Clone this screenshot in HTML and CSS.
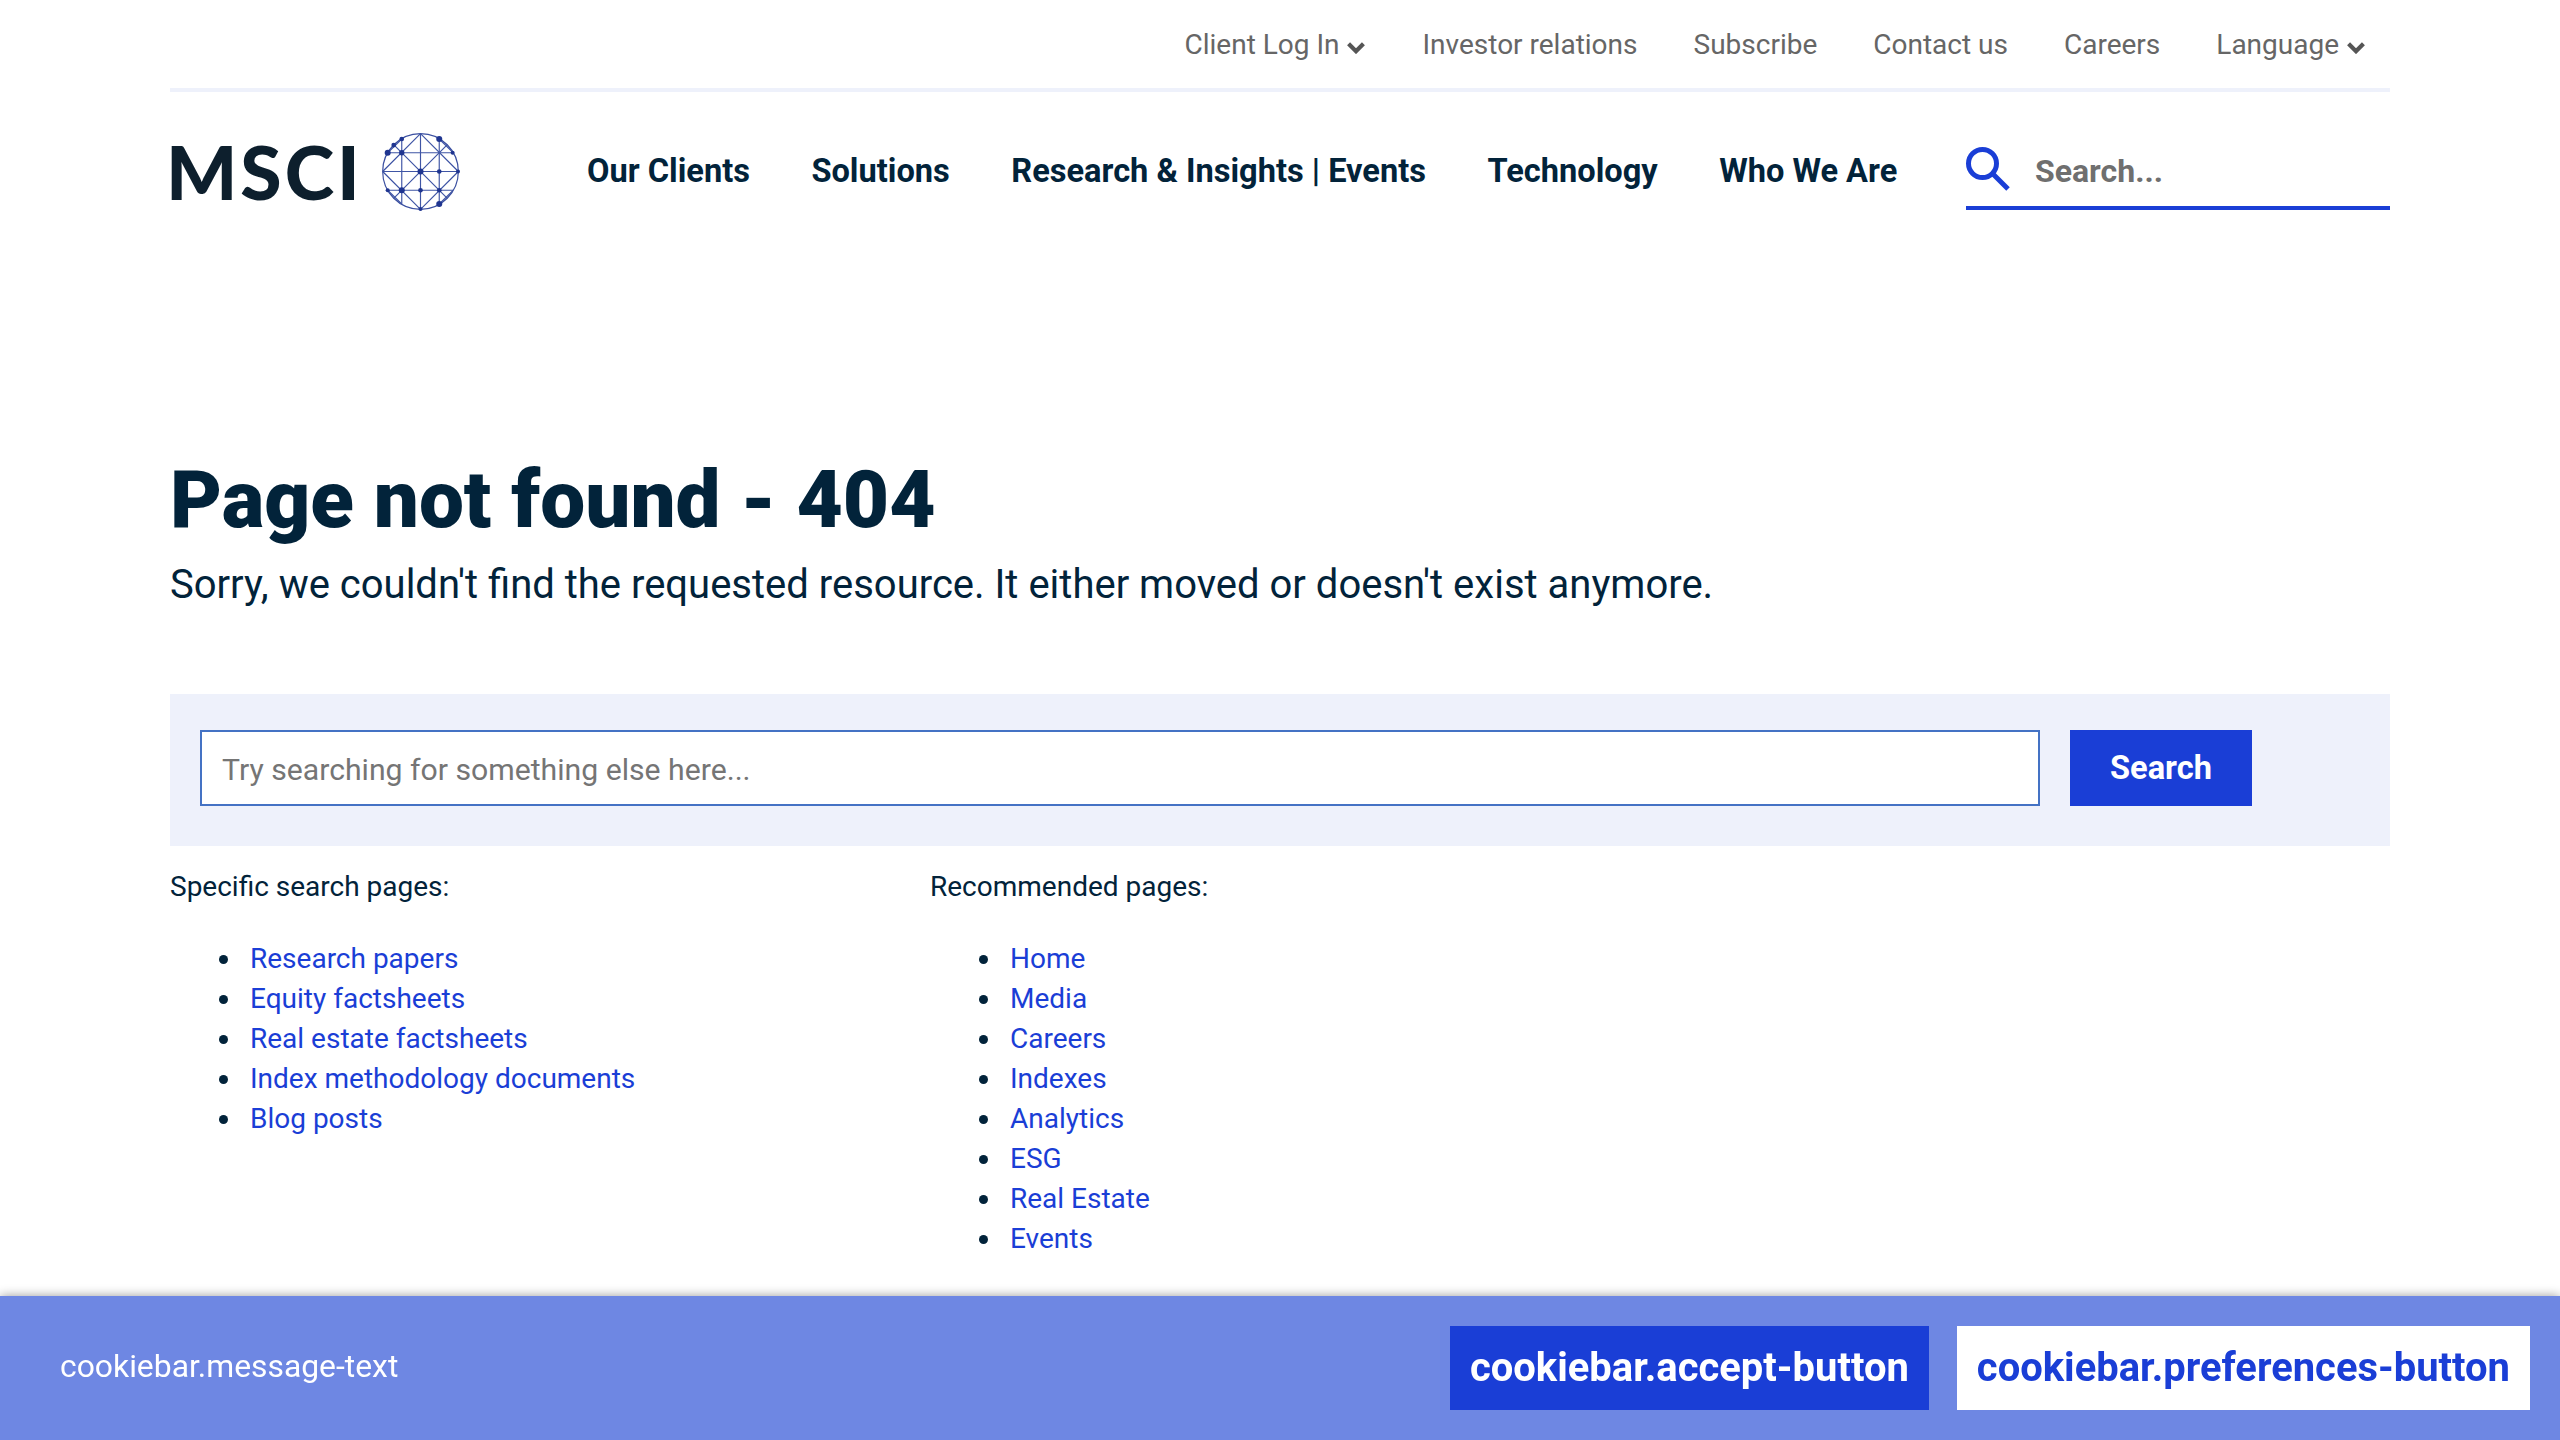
FILE: index.html
```html
<!DOCTYPE html>
<html lang="en">
<head>
    <meta charset="UTF-8">
    <meta name="viewport" content="width=device-width, initial-scale=1.0">
    <title>Page not found - 404</title>
    <link rel="stylesheet" href="styles.css">
</head>
<body>
    <header class="site-header">
        <nav class="top-nav">
            <a href="#">Client Log In <svg class="chevron" viewBox="0 0 20 14"><path d="M2 3l8 8 8-8"/></svg></a>
            <a href="#">Investor relations</a>
            <a href="#">Subscribe</a>
            <a href="#">Contact us</a>
            <a href="#">Careers</a>
            <a href="#">Language <svg class="chevron" viewBox="0 0 20 14"><path d="M2 3l8 8 8-8"/></svg></a>
        </nav>
        <div class="main-bar">
            <a class="logo" href="#">
                <span class="logo-text">MSCI</span>
                <svg class="globe" viewBox="-118 -118 236 236">
                    <defs><clipPath id="globeClip"><circle r="113"/></clipPath></defs>
                    <g clip-path="url(#globeClip)" class="globe-lines">
                        <path d="M-120 -56H120M-120 0H120M-120 56H120M-56 -120V120M0 -120V120M56 -120V120"/>
                        <path d="M0 -113L-113 0L0 113L113 0ZM-113 -113L113 113M113 -113L-113 113M-98 -56L-56 -97M56 -97L98 -56M-98 56L-56 97M56 97L98 56"/>
                    </g>
                    <circle r="113" class="globe-ring"/>
                    <g class="globe-nodes">
                        <circle cx="-56" cy="-56" r="8"/><circle cx="0" cy="0" r="9"/><circle cx="56" cy="0" r="7"/>
                        <circle cx="112" cy="0" r="6"/><circle cx="-56" cy="56" r="9"/><circle cx="0" cy="56" r="7"/>
                        <circle cx="56" cy="56" r="7"/><circle cx="0" cy="112" r="6"/><circle cx="56" cy="97" r="9"/>
                        <circle cx="-98" cy="-56" r="9"/><circle cx="56" cy="-97" r="9"/><circle cx="-56" cy="-97" r="7"/>
                        <circle cx="-80" cy="-79" r="7"/><circle cx="96" cy="-56" r="6"/><circle cx="-98" cy="56" r="6"/>
                    </g>
                </svg>
            </a>
            <nav class="main-nav">
                <a href="#">Our Clients</a>
                <a href="#">Solutions</a>
                <a href="#">Research &amp; Insights | Events</a>
                <a href="#">Technology</a>
                <a href="#">Who We Are</a>
            </nav>
            <div class="header-search">
                <svg class="search-icon" viewBox="0 0 44 44"><circle cx="16.5" cy="16.5" r="14"/><path d="M26.5 26.5l15.500 15.500"/></svg>
                <span class="header-search-text">Search...</span>
            </div>
        </div>
    </header>

    <main class="content">
        <h1>Page not found - 404</h1>
        <p class="lead">Sorry, we couldn't find the requested resource. It either moved or doesn't exist anymore.</p>

        <form class="search-band">
            <input class="search-input" type="text" placeholder="Try searching for something else here...">
            <button class="search-button" type="button">Search</button>
        </form>

        <div class="link-columns">
            <div class="link-column">
                <p>Specific search pages:</p>
                <ul>
                    <li><a href="#">Research papers</a></li>
                    <li><a href="#">Equity factsheets</a></li>
                    <li><a href="#">Real estate factsheets</a></li>
                    <li><a href="#">Index methodology documents</a></li>
                    <li><a href="#">Blog posts</a></li>
                </ul>
            </div>
            <div class="link-column">
                <p>Recommended pages:</p>
                <ul>
                    <li><a href="#">Home</a></li>
                    <li><a href="#">Media</a></li>
                    <li><a href="#">Careers</a></li>
                    <li><a href="#">Indexes</a></li>
                    <li><a href="#">Analytics</a></li>
                    <li><a href="#">ESG</a></li>
                    <li><a href="#">Real Estate</a></li>
                    <li><a href="#">Events</a></li>
                </ul>
            </div>
        </div>
    </main>

    <div class="cookiebar">
        <span class="cookiebar-text">cookiebar.message-text</span>
        <div class="cookiebar-actions">
            <button class="cookie-accept" type="button">cookiebar.accept-button</button>
            <button class="cookie-prefs" type="button">cookiebar.preferences-button</button>
        </div>
    </div>
</body>
</html>
```

FILE: styles.css
```css
body {
    font-family: Roboto, Arial, sans-serif;
    color: #02233a;
    background-color: #fff;
    margin: 0;
    height: 1440px;
    overflow: hidden;
}
a {
    text-decoration: none;
    color: inherit;
}
.site-header {
    margin: 0 170px;
}
.top-nav {
    display: flex;
    justify-content: flex-end;
    align-items: center;
    gap: 56px;
    height: 88px;
    padding-right: 24px;
    border-bottom: 4px solid #eef1fb;
    font-size: 28px;
    color: #666;
}
.chevron {
    width: 20px;
    height: 13px;
    fill: none;
    stroke: #555;
    stroke-width: 4.5;
}
.main-bar {
    display: flex;
    align-items: center;
    height: 158px;
}
.logo {
    display: flex;
    align-items: center;
    gap: 18px;
    width: 417px;
}
.logo-text {
    font-family: Lato, sans-serif;
    font-weight: 900;
    font-size: 75px;
    line-height: 1;
    letter-spacing: 3px;
    color: #0d1f2d;
    margin-left: -4px;
}
.globe {
    width: 79px;
    height: 79px;
}
.globe-lines {
    fill: none;
    stroke: #3f55a5;
    stroke-width: 3.5;
}
.globe-ring {
    fill: none;
    stroke: #3a4fa0;
    stroke-width: 3.5;
}
.globe-nodes {
    fill: #1f3590;
}
.main-nav {
    display: flex;
    gap: 61.5px;
    font-size: 32.6px;
    font-weight: 700;
    color: #02233a;
}
.header-search {
    display: flex;
    align-items: center;
    gap: 25px;
    margin-left: auto;
    width: 424px;
    height: 78px;
    box-sizing: border-box;
    border-bottom: 4px solid #1a3ed6;
}
.search-icon {
    width: 44px;
    height: 44px;
    fill: none;
    stroke: #1a3ed6;
    stroke-width: 5;
}
.header-search-text {
    font-size: 32px;
    font-weight: 700;
    color: #6f6f6f;
    margin-top: 3px;
}
.content {
    margin: 0 170px;
}
h1 {
    font-size: 80px;
    font-weight: 900;
    line-height: 100px;
    margin: 200px 0 0;
    color: #02233a;
}
.lead {
    font-size: 40px;
    line-height: 50px;
    margin: 10px 0 0;
}
.search-band {
    display: flex;
    gap: 30px;
    margin-top: 84px;
    padding: 36px 138px 40px 30px;
    background-color: #eef1fb;
    height: 152px;
    box-sizing: border-box;
}
.search-input {
    flex: 1;
    height: 76px;
    box-sizing: border-box;
    padding: 2px 20px 0;
    border: 2px solid #4472c4;
    font-family: Roboto, Arial, sans-serif;
    font-size: 30.2px;
    background: #fff;
}
.search-input::placeholder {
    color: #757575;
    opacity: 1;
}
.search-button {
    width: 182px;
    height: 76px;
    border: none;
    background-color: #1a3ed6;
    color: #fff;
    font-family: Roboto, Arial, sans-serif;
    font-size: 32.6px;
    font-weight: 700;
}
.link-columns {
    display: grid;
    grid-template-columns: 760px 1fr;
}
.link-column p {
    font-size: 28px;
    line-height: 40px;
    margin: 21px 0 32px;
}
.link-column ul {
    margin: 0;
    padding-left: 73px;
    font-size: 28px;
    line-height: 40px;
}
.link-column li {
    padding-left: 7px;
}
.link-column a {
    color: #1a3ed6;
}
.cookiebar {
    position: fixed;
    left: 0;
    right: 0;
    bottom: 0;
    height: 144px;
    display: flex;
    align-items: center;
    justify-content: space-between;
    padding: 0 30px 0 60px;
    box-sizing: border-box;
    background-color: #6e87e3;
    box-shadow: 0 0 10px rgba(0,0,0,0.4);
}
.cookiebar-text {
    color: #fff;
    font-size: 31.85px;
    margin-top: -4px;
}
.cookiebar-actions {
    display: flex;
    gap: 28px;
}
.cookiebar-actions button {
    height: 84px;
    border: none;
    padding: 0 20px 2px;
    font-family: Roboto, Arial, sans-serif;
    font-size: 39.95px;
    font-weight: 700;
}
.cookie-accept {
    background-color: #1a3ed6;
    color: #fff;
}
.cookie-prefs {
    background-color: #fff;
    color: #1a3ed6;
}
```
